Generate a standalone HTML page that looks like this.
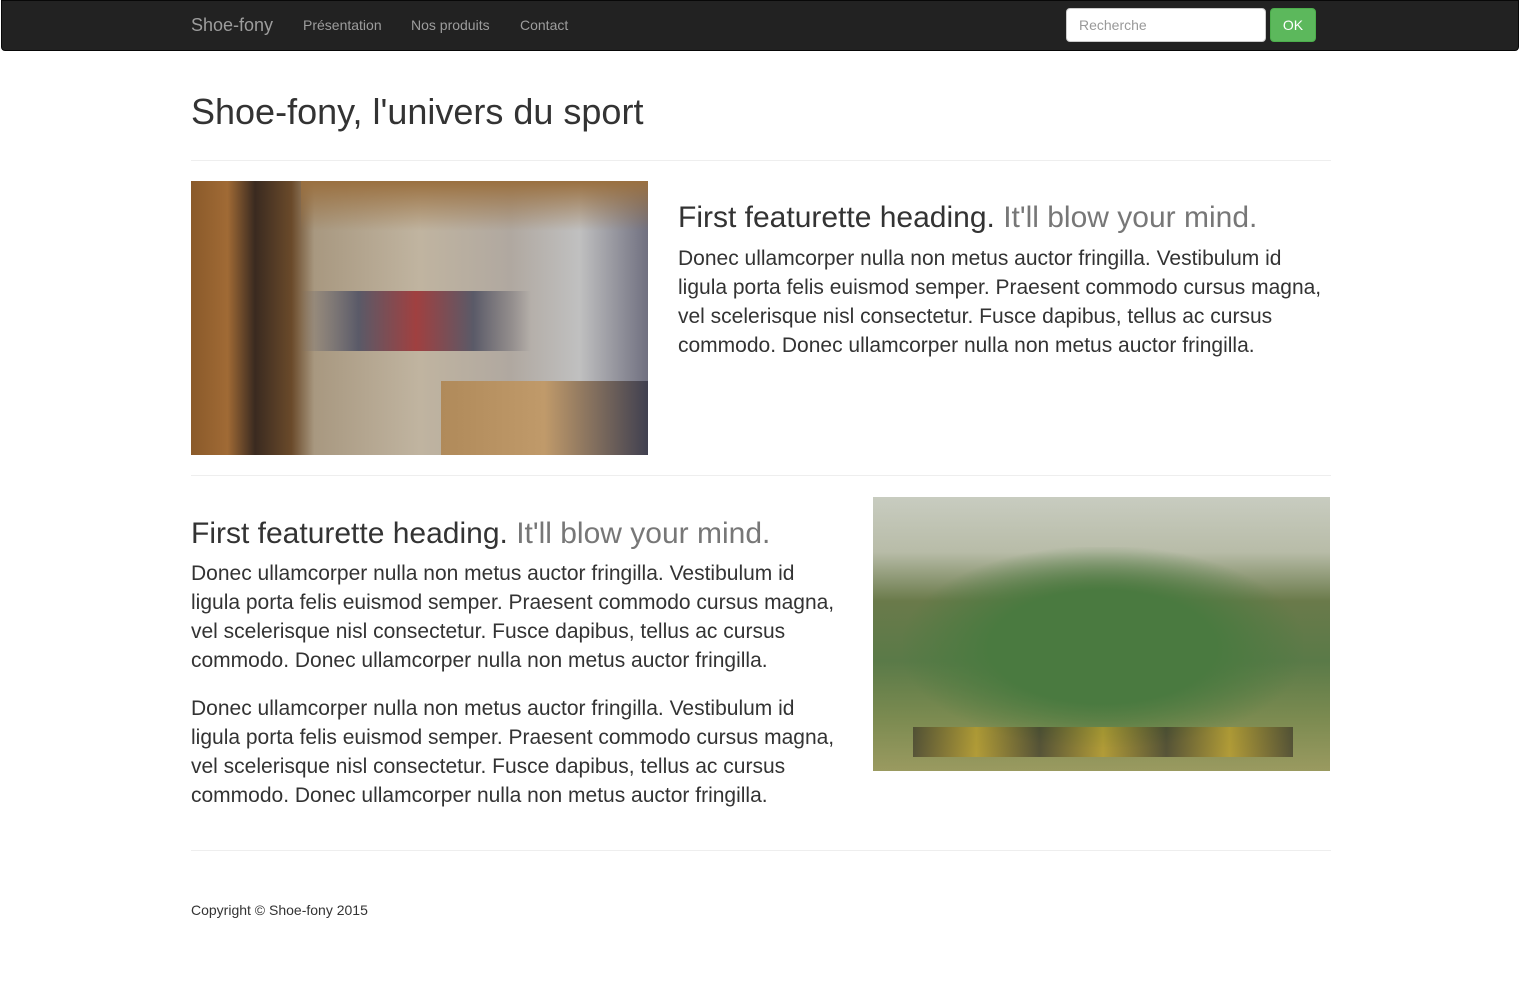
<!DOCTYPE html>
<html><head><meta charset="utf-8"><style>
*{box-sizing:border-box}
body{margin:0;font-family:"Liberation Sans",Arial,sans-serif;color:#333;background:#fff;width:1519px;height:981px;overflow:hidden}
.nav{position:absolute;left:1px;top:0;width:1518px;height:51px;background:#222;border:1px solid #080808;border-radius:0 0 4px 4px}
.nav a{position:absolute;color:#9d9d9d;font-size:14px;top:16px;text-decoration:none}
.brand{font-size:18px!important;top:14px!important}
.search{position:absolute;left:1064px;top:7px;width:200px;height:34px;border:1px solid #ccc;border-radius:4px;background:#fff;color:#999;font-size:14px;padding:8px 12px}
.ok{position:absolute;left:1268px;top:7px;width:46px;height:34px;background:#5cb85c;border:1px solid #4cae4c;border-radius:4px;color:#fff;font-size:14px;text-align:center;line-height:32px}
h1{position:absolute;left:191px;top:92px;margin:0;font-size:36px;font-weight:400;line-height:40px}
.hr{position:absolute;left:191px;width:1140px;height:1px;background:#eee}
.fh{position:absolute;margin:0;font-size:30px;font-weight:400;line-height:33px}
.fh span{color:#777}
.p{position:absolute;font-size:21px;line-height:29px;margin:0;width:650px}
.img{position:absolute;width:457px;height:274px;overflow:hidden}
</style></head><body>
<div class="nav">
<a class="brand" style="left:189px">Shoe-fony</a>
<a style="left:301px">Présentation</a>
<a style="left:409px">Nos produits</a>
<a style="left:518px">Contact</a>
<div class="search">Recherche</div>
<div class="ok">OK</div>
</div>
<h1>Shoe-fony, l'univers du sport</h1>
<div class="hr" style="top:160px"></div>
<div class="img" style="left:191px;top:181px;background:linear-gradient(90deg,#8a5a2a 0%,#a06a35 8%,#3a2a20 14%,#6a4a2a 22%,#a89880 27%,#c0b4a0 50%,#b0a8a0 70%,#c0c0c0 85%,#707080 100%)">
<div style="position:absolute;left:110px;top:0;width:347px;height:50px;background:linear-gradient(#9a7040,rgba(200,184,160,0))"></div>
<div style="position:absolute;left:110px;top:110px;width:230px;height:60px;background:linear-gradient(90deg,rgba(80,80,90,0),#5a5a68,#a04040,#5a5a68,rgba(80,80,90,0))"></div>
<div style="position:absolute;left:250px;top:200px;width:207px;height:74px;background:linear-gradient(90deg,#b08a5a,#c09a6a,#404050)"></div>
</div>
<h2 class="fh" style="left:678px;top:201px">First featurette heading. <span>It'll blow your mind.</span></h2>
<p class="p" style="left:678px;top:244px">Donec ullamcorper nulla non metus auctor fringilla. Vestibulum id ligula porta felis euismod semper. Praesent commodo cursus magna, vel scelerisque nisl consectetur. Fusce dapibus, tellus ac cursus commodo. Donec ullamcorper nulla non metus auctor fringilla.</p>
<div class="hr" style="top:475px"></div>
<h2 class="fh" style="left:191px;top:517px">First featurette heading. <span>It'll blow your mind.</span></h2>
<p class="p" style="left:191px;top:559px">Donec ullamcorper nulla non metus auctor fringilla. Vestibulum id ligula porta felis euismod semper. Praesent commodo cursus magna, vel scelerisque nisl consectetur. Fusce dapibus, tellus ac cursus commodo. Donec ullamcorper nulla non metus auctor fringilla.</p>
<p class="p" style="left:191px;top:694px">Donec ullamcorper nulla non metus auctor fringilla. Vestibulum id ligula porta felis euismod semper. Praesent commodo cursus magna, vel scelerisque nisl consectetur. Fusce dapibus, tellus ac cursus commodo. Donec ullamcorper nulla non metus auctor fringilla.</p>
<div class="img" style="left:873px;top:497px;background:linear-gradient(#c8ccc0 0%,#b8bca8 20%,#6a7a4a 38%,#5a7a48 60%,#7a8a50 80%,#9a9a60 100%)">
<div style="position:absolute;left:30px;top:50px;width:400px;height:200px;background:radial-gradient(ellipse at center,#4a7a40 40%,rgba(74,122,64,0) 72%)"></div>
<div style="position:absolute;left:40px;top:230px;width:380px;height:30px;background:linear-gradient(90deg,#302820,#c8a020,#302820,#c8a020,#302820,#c8a020,#302820);opacity:.6"></div>
</div>
<div class="hr" style="top:850px"></div>
<div style="position:absolute;left:191px;top:902px;font-size:14px">Copyright © Shoe-fony 2015</div>
</body></html>
